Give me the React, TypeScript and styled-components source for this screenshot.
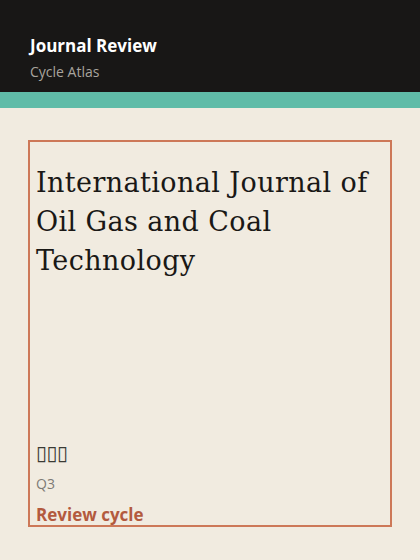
import styled, { createGlobalStyle } from 'styled-components';

const GlobalStyle = createGlobalStyle`
  html, body {
    margin: 0;
    padding: 0;
    background: #f1ebe0;
  }
  body {
    font-family: 'Open Sans', 'Noto Sans', sans-serif;
  }
`;

const Page = styled.div`
  width: 420px;
  height: 560px;
  display: flex;
  flex-direction: column;
  background: #f1ebe0;
  overflow: hidden;
`;

const Header = styled.header`
  background: #181716;
  padding: 34px 30px 9px;
  display: flex;
  flex-direction: column;
  gap: 3px;
`;

const Brand = styled.h1`
  margin: 0;
  font-size: 17px;
  font-weight: 700;
  line-height: 24px;
  color: #ffffff;
`;

const Subtitle = styled.span`
  font-size: 14px;
  line-height: 22px;
  color: #a8a49e;
`;

const Band = styled.div`
  height: 16px;
  background: #5fbca8;
`;

const Main = styled.main`
  padding: 32px 28px 33px;
  flex: 1;
  display: flex;
`;

const Card = styled.article`
  flex: 1;
  border: 2px solid #cd7858;
  padding: 21px 6px 0;
  display: flex;
  flex-direction: column;
`;

const Title = styled.h2`
  margin: 0;
  font-family: 'DejaVu Serif', Georgia, serif;
  font-weight: 400;
  font-size: 27px;
  letter-spacing: 0.4px;
  line-height: 39px;
  color: #1a1816;
`;

const Meta = styled.div`
  margin-top: auto;
  display: flex;
  flex-direction: column;
`;

const Code = styled.span`
  font-family: 'DejaVu Sans', sans-serif;
  font-size: 20px;
  line-height: 22px;
  letter-spacing: -0.5px;
  color: #3a3a34;
`;

const Quarter = styled.span`
  margin-top: 9px;
  font-size: 14px;
  line-height: 22px;
  color: #7d7a75;
`;

const Link = styled.a`
  margin-top: 10px;
  font-size: 17px;
  font-weight: 700;
  line-height: 20px;
  color: #b35a3e;
  text-decoration: none;
`;

export default function App() {
  return (
    <>
      <GlobalStyle />
      <Page>
        <Header>
          <Brand>Journal Review</Brand>
          <Subtitle>Cycle Atlas</Subtitle>
        </Header>
        <Band />
        <Main>
          <Card>
            <Title>International Journal of Oil Gas and Coal Technology</Title>
            <Meta>
              <Code>▯▯▯</Code>
              <Quarter>Q3</Quarter>
              <Link href="#">Review cycle</Link>
            </Meta>
          </Card>
        </Main>
      </Page>
    </>
  );
}
